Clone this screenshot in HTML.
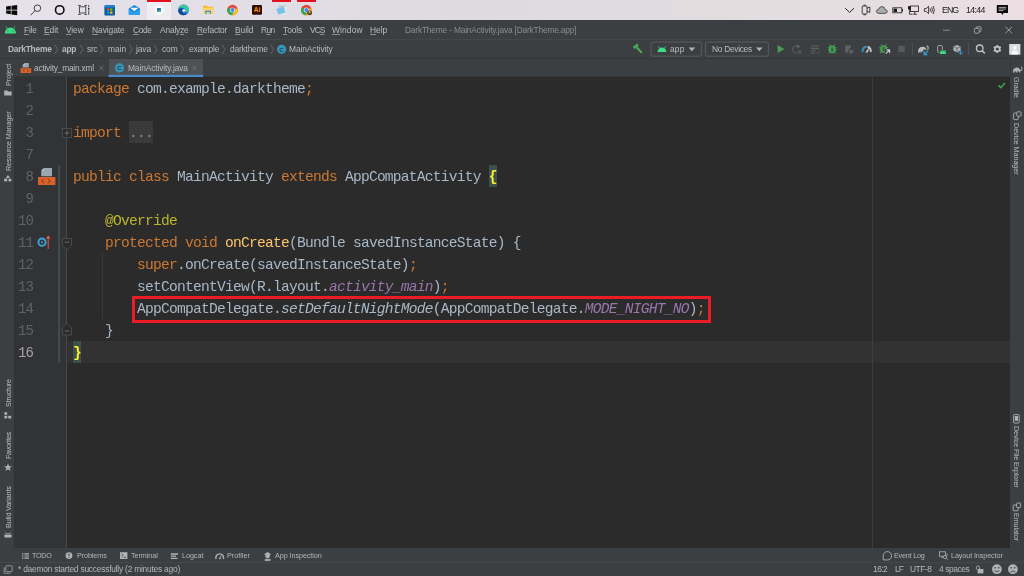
<!DOCTYPE html>
<html lang="en">
<head>
<meta charset="utf-8">
<title>DarkTheme - MainActivity.java [DarkTheme.app]</title>
<style>
*{margin:0;padding:0;box-sizing:border-box}
html,body{width:1024px;height:576px;overflow:hidden;background:#2b2b2b}
body{position:relative;font-family:"Liberation Sans",sans-serif;font-size:8px;color:#bbbbbb}
.abs{position:absolute}
.code,.ln,.t,.vl{will-change:transform}
svg{position:absolute;overflow:visible}
.t{position:absolute;white-space:nowrap;line-height:10px;height:10px}
#taskbar{left:0;top:0;width:1024px;height:20px;background:linear-gradient(90deg,#e5e2eb 0%,#e1dee6 25%,#dddbde 45%,#e2dcdf 70%,#ebdfe4 100%)}
#menubar{left:0;top:20px;width:1024px;height:20px;background:#3c3f41}
#navbar{left:0;top:39px;width:1024px;height:20px;background:#3c3f41;border-top:1px solid #45484a;border-bottom:1px solid #35383a}
#tabbar{left:14px;top:59px;width:996px;height:18px;background:#3c3f41;border-bottom:1px solid #333638}
#lstrip{left:0;top:59px;width:14px;height:489px;background:#3c3f41}
#rstrip{left:1010px;top:59px;width:14px;height:489px;background:#3c3f41}
#editor{left:14px;top:77px;width:996px;height:471px;background:#2b2b2b}
#gutter{left:14px;top:77px;width:53px;height:471px;background:#313335}
#gline{left:66px;top:77px;width:1px;height:471px;background:#484848}
#caretrow{left:14px;top:341px;width:996px;height:22px;background:#323232}
#bottombar{left:0;top:548px;width:1024px;height:14px;background:#3c3f41}
#statusbar{left:0;top:562px;width:1024px;height:14px;background:#3c3f41;border-top:1px solid #444749}
.menu{color:#bbbbbb;font-size:8.4px;top:24.8px}
.menu u{text-decoration:underline;text-underline-offset:0.6px;text-decoration-thickness:0.6px;text-decoration-color:#8e9092}
.bc{color:#bbbbbb;font-size:8.4px;top:43.8px}
.bc b{font-weight:bold}
.tab{color:#bbbbbb;font-size:8.4px;top:62.5px}
.tw{color:#b4b6b8;font-size:7.2px;top:551.4px}
.st{color:#b4b6b8;font-size:8.4px;top:564.2px}
.tb{color:#1a1a1a;font-size:8.8px;top:5.3px}
.vl{position:absolute;white-space:nowrap;font-size:7.2px;line-height:10px;height:10px;color:#bbbbbb;transform-origin:0 0}
.vl.l{transform:rotate(-90deg)}
.vl.r{transform:rotate(90deg)}
.code{position:absolute;left:73px;white-space:pre;font-family:"Liberation Mono","DejaVu Sans Mono",monospace;font-size:14.6px;letter-spacing:-0.7614px;line-height:22px;height:22px;color:#a9b7c6}
.ln{position:absolute;left:12.6px;width:20px;text-align:right;white-space:pre;font-family:"Liberation Mono","DejaVu Sans Mono",monospace;font-size:14px;letter-spacing:-0.9px;line-height:22px;height:22px;color:#606366}
.k{color:#cc7832}.an{color:#bbb529}.fn{color:#ffc66d}.sf{color:#9876aa;font-style:italic}.sm{font-style:italic}
.br{background:#3b514d;color:#ffef28;font-weight:bold;display:inline-block;height:22px;vertical-align:top;margin-top:-1px;padding-top:1px}
.fold{background:#3a3a3a;color:#8c8c8c;display:inline-block;height:22px;vertical-align:top;margin-top:-1px;padding-top:1px}
.combo{position:absolute;top:41.5px;height:15px;border:1px solid #5e6062;border-radius:2px}
</style>
</head>
<body>
<div id="taskbar" class="abs"></div>
<div id="menubar" class="abs"></div>
<div id="navbar" class="abs"></div>
<div id="tabbar" class="abs"></div>
<div id="editor" class="abs"></div>
<div id="caretrow" class="abs"></div>
<div id="gutter" class="abs"></div>
<div id="gline" class="abs"></div>
<div id="lstrip" class="abs"></div>
<div id="rstrip" class="abs"></div>
<div id="bottombar" class="abs"></div>
<div id="statusbar" class="abs"></div>

<!--TASKBAR ICONS-->
<div class="abs" style="left:147px;top:0;width:24px;height:20px;background:#efedf2"></div>
<div class="abs" style="left:147px;top:0;width:24px;height:1.6px;background:#e3101f"></div>
<div class="abs" style="left:272.3px;top:0;width:18.7px;height:1.6px;background:#e3101f"></div>
<div class="abs" style="left:297px;top:0;width:18.7px;height:1.6px;background:#e3101f"></div>
<svg style="left:0;top:0" width="330" height="20" viewBox="0 0 330 20">
 <!-- windows logo -->
 <g fill="#0a0a0a">
  <path d="M6.1 6.5 L10.8 5.8 L10.8 9.7 L6.1 9.7 Z"/>
  <path d="M11.5 5.7 L17.2 4.9 L17.2 9.7 L11.5 9.7 Z"/>
  <path d="M6.1 10.4 L10.8 10.4 L10.8 14.3 L6.1 13.6 Z"/>
  <path d="M11.5 10.4 L17.2 10.4 L17.2 15.2 L11.5 14.4 Z"/>
 </g>
 <!-- search -->
 <circle cx="37.4" cy="8.2" r="3.3" fill="none" stroke="#222" stroke-width="0.85"/>
 <path d="M35 10.7 L30.5 15.3" stroke="#222" stroke-width="0.85" fill="none"/>
 <!-- cortana -->
 <circle cx="59.7" cy="9.9" r="4.2" fill="none" stroke="#111" stroke-width="1.6"/>
 <!-- task view -->
 <g fill="none" stroke="#333" stroke-width="0.85">
  <rect x="79.4" y="6.8" width="6.4" height="6.2"/>
  <path d="M78 5.4 H80.8 M84.4 5.4 H87 M78 14.4 H80.8 M84.4 14.4 H87"/>
  <path d="M88.7 5 V7.4 M88.7 10.4 V14.8"/>
 </g>
 <rect x="88" y="8" width="1.4" height="1.6" fill="#222"/>
 <!-- store -->
 <path d="M104.4 6.6 H115 V14.6 Q115 15.6 114 15.6 H105.4 Q104.4 15.6 104.4 14.6 Z" fill="#0d5a9c"/>
 <path d="M105.4 5 H114 Q115 5 115 6 V7.4 H104.4 V6 Q104.4 5 105.4 5 Z" fill="#2580cc"/>
 <rect x="107" y="8.4" width="2.3" height="2.3" fill="#f25022"/>
 <rect x="110.1" y="8.4" width="2.3" height="2.3" fill="#7fba00"/>
 <rect x="107" y="11.5" width="2.3" height="2.3" fill="#00a4ef"/>
 <rect x="110.1" y="11.5" width="2.3" height="2.3" fill="#ffb900"/>
 <!-- mail -->
 <path d="M128.8 8.6 L134.4 5 L140 8.6 V14.8 H128.8 Z" fill="#1684d8"/>
 <path d="M130.2 7.8 H138.6 L134.4 11.2 Z" fill="#f4f9fd"/>
 <path d="M128.8 9 L134.4 12.6 L140 9 V14.8 H128.8 Z" fill="#2a9df0"/>
 <!-- android studio -->
 <circle cx="159" cy="10" r="4.6" fill="#ffffff"/>
 <path d="M157 8 H161 V12 H157 Z" fill="#3a7fd5"/>
 <path d="M158.2 9.6 L159.6 8.2 L161 12 H158.4 Z" fill="#3ddc84"/>
 <circle cx="159" cy="9.4" r="0.9" fill="#1c3d6e"/>
 <!-- edge -->
 <circle cx="183.5" cy="9.9" r="5.4" fill="#1b7fd1"/>
 <path d="M183.5 4.5 A5.4 5.4 0 0 1 188.9 9.9 Q188.9 12 186.5 12 Q184.2 12 184.6 10 Q185 8 183 7.6 Q180 7.4 178.6 9 A5.4 5.4 0 0 1 183.5 4.5 Z" fill="#3fc7a0"/>
 <path d="M178.2 10.6 Q178.4 14.8 183 15.2 Q185.6 15.2 187.4 13.4 Q184 14.4 182.4 12.2 Q181.2 10 183 8.4 Q179.4 7.8 178.2 10.6 Z" fill="#15458c"/>
 <circle cx="183.8" cy="10.6" r="1.4" fill="#e8eef5"/>
 <!-- explorer -->
 <path d="M203 5.8 H207 L208 6.8 H213.2 V13.8 H203 Z" fill="#f5b63a"/>
 <path d="M203 7.8 H213.2 V13.8 H203 Z" fill="#ffd767"/>
 <rect x="205.2" y="10.6" width="5.8" height="3.2" fill="#3a96dd"/>
 <rect x="206.6" y="12" width="3" height="1.8" fill="#ffd767"/>
 <!-- chrome -->
 <g id="chr">
 <circle cx="232.5" cy="10" r="5.3" fill="#e8453c"/>
 <path d="M232.5 10 L227.9 7.4 A5.3 5.3 0 0 0 232.0 15.3 L234.9 10.5 Z" fill="#34a853"/>
 <path d="M232.5 10 L237.5 8.2 A5.3 5.3 0 0 1 232.0 15.3 L234.8 10.6 Z" fill="#fbc116"/>
 <circle cx="232.5" cy="10" r="2.5" fill="#f3f3f3"/>
 <circle cx="232.5" cy="10" r="1.9" fill="#4285f4"/>
 </g>
 <!-- illustrator -->
 <rect x="252" y="5" width="10" height="9.8" rx="1.4" fill="#2e0a00"/>
 <text x="257" y="12.4" font-family="Liberation Sans, sans-serif" font-weight="bold" font-size="6.4" fill="#ff9a00" text-anchor="middle">Ai</text>
 <!-- notepad -->
 <path d="M277.6 5.4 L286 5 L286.6 13.6 L279 14.4 Z" fill="#dfe9f2"/>
 <path d="M276.2 9 L283.6 6.2 L285.4 12.6 L278.4 14.4 Z" fill="#7cc0ea"/>
 <path d="M278.2 5.8 L285.6 5.2 L285.8 6.6 L278.4 7.4 Z" fill="#b8c4cf"/>
 <!-- chrome 2 -->
 <use href="#chr" x="73.8" y="0"/>
 <circle cx="309.6" cy="12.8" r="2.5" fill="#6b4a22"/>
 <circle cx="309.6" cy="12" r="1" fill="#d9b070"/>
</svg>
<svg style="left:840px;top:0" width="184" height="20" viewBox="840 0 184 20">
 <!-- chevron -->
 <path d="M845.2 8.2 L849.6 12.4 L854 8.2" fill="none" stroke="#111" stroke-width="0.9"/>
 <!-- meet now / device -->
 <g fill="none" stroke="#1a1a1a" stroke-width="0.8">
  <rect x="862.2" y="6" width="4.8" height="8" rx="0.8"/>
  <path d="M863.4 5.2 H865.8 M863.4 14.8 H865.8"/>
  <path d="M867 8.2 L869.8 7 V12.4 L867 11.4"/>
 </g>
 <!-- cloud -->
 <path d="M878.6 13.4 H885.2 Q887.4 13.2 887.2 11.2 Q887 9.6 885.2 9.6 Q884.8 6.6 881.8 6.6 Q879.2 6.8 878.8 9.2 Q876.4 9.4 876.4 11.4 Q876.6 13.2 878.6 13.4 Z" fill="#a7acb0" stroke="#2a2a2a" stroke-width="0.7"/>
 <!-- battery -->
 <rect x="892.8" y="7.8" width="9" height="5" fill="none" stroke="#1a1a1a" stroke-width="0.8"/>
 <rect x="893.6" y="8.6" width="3.4" height="3.4" fill="#1a1a1a"/>
 <rect x="902" y="9.2" width="1" height="2.2" fill="#1a1a1a"/>
 <!-- network -->
 <g fill="none" stroke="#1a1a1a" stroke-width="0.8">
  <rect x="910.6" y="6" width="8" height="5.6"/>
  <path d="M912.6 14.2 H917 M914.8 11.6 V14.2"/>
  <rect x="908.4" y="6.6" width="2" height="2.4" fill="#1a1a1a"/>
  <path d="M909.4 9 V14.2 H912"/>
 </g>
 <!-- volume -->
 <path d="M924.4 8.6 H926.2 L928.6 6.4 V13.6 L926.2 11.4 H924.4 Z" fill="none" stroke="#1a1a1a" stroke-width="0.8"/>
 <path d="M930 8.4 Q931 10 930 11.6 M931.6 7.2 Q933.2 10 931.6 12.8 M933.2 6 Q935.4 10 933.2 14" fill="none" stroke="#1a1a1a" stroke-width="0.8"/>
 <!-- notification -->
 <path d="M996.8 5 H1008 V13 H1003.6 L1002.4 15 L1001.2 13 H996.8 Z" fill="#0a0a0a"/>
 <path d="M998.6 7.4 H1006.2 M998.6 9 H1006.2 M998.6 10.6 H1003.4" stroke="#f0e6ea" stroke-width="0.7"/>
</svg>

<!--CHROME ICONS-->
<svg style="left:0;top:20px" width="1024" height="57" viewBox="0 20 1024 57">
 <!-- android logo in menubar -->
 <path d="M4.8 33.4 A5.6 5.8 0 0 1 16 33.4 Z" fill="#3ddc84"/>
 <path d="M7.2 28.6 L6 26.4 M13.6 28.6 L14.8 26.4" stroke="#3ddc84" stroke-width="0.8" fill="none"/>
 <circle cx="7.9" cy="31" r="0.55" fill="#3c3f41"/><circle cx="12.9" cy="31" r="0.55" fill="#3c3f41"/>
 <!-- window controls -->
 <path d="M943 30.2 H949.8" stroke="#9da0a2" stroke-width="0.8"/>
 <g fill="none" stroke="#b4b6b8" stroke-width="0.8">
  <rect x="974.4" y="28.4" width="4.8" height="4.8" rx="0.8"/>
  <path d="M976.2 28.2 V27.6 Q976.2 26.8 977 26.8 H980.2 Q981 26.8 981 27.6 V30.8 Q981 31.6 980.2 31.6 H979.4"/>
  <path d="M1005.6 26.8 L1012 33.2 M1012 26.8 L1005.6 33.2"/>
 </g>
 <!-- breadcrumb separators -->
 <g fill="none" stroke="#6b6e70" stroke-width="0.8">
  <path d="M54.6 44.6 L57.6 49.4 L54.6 54.2"/>
  <path d="M80 44.6 L83 49.4 L80 54.2"/>
  <path d="M100 44.6 L103 49.4 L100 54.2"/>
  <path d="M129.2 44.6 L132.2 49.4 L129.2 54.2"/>
  <path d="M154 44.6 L157 49.4 L154 54.2"/>
  <path d="M180.6 44.6 L183.6 49.4 L180.6 54.2"/>
  <path d="M222 44.6 L225 49.4 L222 54.2"/>
  <path d="M270.6 44.6 L273.6 49.4 L270.6 54.2"/>
 </g>
 <!-- class icon in breadcrumb -->
 <circle cx="281.6" cy="49.3" r="4.6" fill="#3792b8"/>
 <text x="281.6" y="51.6" font-family="Liberation Sans, sans-serif" font-weight="bold" font-size="6.2" fill="#25424f" text-anchor="middle">C</text>
 <!-- selected tab -->
 <rect x="109" y="59" width="94" height="16" fill="#4e5254"/>
 <rect x="108.4" y="74.8" width="94.8" height="2.2" fill="#4a88c7"/>
 <!-- xml file icon -->
 <path d="M25.2 63 H28.8 V67.6 H22.6 V65.6 Z" fill="#9aa7b0"/>
 <path d="M22.6 65.2 L24.8 63 V65.2 Z" fill="#c3ccd2"/>
 <rect x="20.6" y="68.2" width="10.6" height="4.8" fill="#d9622b"/>
 <path d="M24.6 69.4 L23.2 70.6 L24.6 71.8 M27.2 69.4 L28.6 70.6 L27.2 71.8" fill="none" stroke="#6d2f12" stroke-width="0.7"/>
 <!-- tab close icons -->
 <g fill="none" stroke="#7a7d7f" stroke-width="0.7">
  <path d="M99.2 65.8 L103.6 70.2 M103.6 65.8 L99.2 70.2"/>
  <path d="M192.2 65.8 L196.6 70.2 M196.6 65.8 L192.2 70.2"/>
 </g>
 <!-- class icon in tab -->
 <circle cx="119.5" cy="67.9" r="4.6" fill="#3792b8"/>
 <text x="119.5" y="70.2" font-family="Liberation Sans, sans-serif" font-weight="bold" font-size="6.2" fill="#25424f" text-anchor="middle">C</text>
 <!-- hammer -->
 <path d="M633.5 47.9 L638 44.7" stroke="#4ca556" stroke-width="2.7" fill="none"/>
 <path d="M636 46.4 L641.2 52.2" stroke="#4ca556" stroke-width="2.2" stroke-linecap="round" fill="none"/>
 <!-- combos -->
 <rect x="651" y="42" width="50.4" height="14.2" rx="2" fill="none" stroke="#5d6062" stroke-width="0.9"/>
 <rect x="705.4" y="42" width="63" height="14.2" rx="2" fill="none" stroke="#5d6062" stroke-width="0.9"/>
 <path d="M657.6 52 A4.4 4.6 0 0 1 666.4 52 Z" fill="#3ddc84"/>
 <path d="M659.4 48 L658.4 46.2 M664.6 48 L665.6 46.2" stroke="#3ddc84" stroke-width="0.7"/>
 <path d="M688.6 47.4 H695.2 L691.9 51.2 Z" fill="#afb1b3"/>
 <path d="M756 47.4 H762.6 L759.3 51.2 Z" fill="#afb1b3"/>
 <!-- run -->
 <path d="M777.6 45 L784.4 49 L777.6 53 Z" fill="#499c54"/>
 <!-- apply changes (disabled) -->
 <g fill="none" stroke="#5f6264" stroke-width="1">
  <path d="M799.2 50.4 A3.4 3.4 0 1 1 797.6 46.4"/>
 </g>
 <path d="M797 44.4 L800.6 46.4 L797.4 48.6 Z" fill="#5f6264"/>
 <text x="798.6" y="53.6" font-family="Liberation Sans, sans-serif" font-weight="bold" font-size="4.6" fill="#5f6264">A</text>
 <!-- apply code changes (disabled) -->
 <path d="M810.8 46 H819 M810.8 48.4 H819 M810.8 50.8 H816 M810.8 53 H815" stroke="#5f6264" stroke-width="1.1" fill="none"/>
 <path d="M817.6 52.8 Q819.8 53 819.6 50.6" stroke="#5f6264" stroke-width="0.7" fill="none"/>
 <!-- debug -->
 <g id="bug">
  <rect x="828.8" y="45.6" width="6.8" height="7.6" rx="3" fill="#499c54"/>
  <path d="M830.4 45.8 L829.4 44.5 M834 45.8 L835 44.5" stroke="#499c54" stroke-width="1" fill="none"/>
  <path d="M829 47.8 H827.9 M835.4 47.8 H836.5 M829 50.2 H827.9 M835.4 50.2 H836.5 M829.6 52.4 L828.6 53.2 M834.8 52.4 L835.8 53.2" stroke="#499c54" stroke-width="1" fill="none"/>
  <rect x="831.3" y="47.4" width="1.8" height="4.2" fill="#305c38"/>
 </g>
 <!-- coverage (disabled) -->
 <path d="M845.2 45.4 H851 V47.4 L848.6 49 V52.6 H845.2 Z" fill="#5f6264"/>
 <path d="M849.8 49 L854.4 51.6 L849.8 54.2 Z" fill="#5f6264"/>
 <!-- profiler gauge -->
 <path d="M862.8 52 A4 4 0 0 1 866.6 46.7" fill="none" stroke="#3592c4" stroke-width="2"/>
 <path d="M867.6 46.8 A4 4 0 0 1 870.6 52" fill="none" stroke="#c4c6c8" stroke-width="2"/>
 <path d="M865.8 52.2 L868.8 48 L867.6 52.2 Z" fill="#c4c6c8" stroke="#c4c6c8" stroke-width="0.6"/>
 <!-- attach debugger -->
 <use href="#bug" x="51.4" y="-0.4"/>
 <rect x="884.8" y="49" width="5.6" height="5.4" fill="#3c3f41"/>
 <path d="M885.8 53.6 L889.2 50.2 M886.4 49.9 H889.6 V53.1" stroke="#c4c6c8" stroke-width="1.2" fill="none"/>
 <!-- stop (disabled) -->
 <rect x="898.2" y="45.8" width="6.6" height="6.4" fill="#56595b"/>
 <!-- separators -->
 <path d="M912.4 43 V55 M968.6 43 V55" stroke="#555759" stroke-width="0.8"/>
 <!-- gradle sync -->
 <path d="M918 52.6 Q917.6 47.4 922.2 46.8 Q925.6 46.6 926.2 49 L926.4 49.6 Q927.4 49.4 927.6 48.2 Q927.6 47 926.6 46.6 L926.4 45.6 Q928.6 45.4 928.8 47.8 Q929 50.4 926.6 51 L925 51 V52.6 H923.2 V51.2 H921.8 V52.6 H920.4 V51.2 L919.6 52.6 Z" fill="#b7b9bb"/>
 <path d="M923.2 49.6 H929 V55 H923.2 Z" fill="#3c3f41"/>
 <path d="M928.2 50.6 L924.6 54.2 M924.2 51.4 V54.6 H927.4" stroke="#389fd6" stroke-width="1.3" fill="none"/>
 <!-- avd manager -->
 <rect x="937.7" y="45.6" width="4.6" height="6.8" rx="0.8" fill="none" stroke="#afb1b3" stroke-width="0.9"/>
 <path d="M939.4 50 H946.4 V54.4 H939.4 Z" fill="#3c3f41"/>
 <path d="M939.9 54 A3.1 3.4 0 0 1 946.1 54 Z" fill="#3ddc84"/>
 <path d="M941.2 51.4 L940.4 50 M944.8 51.4 L945.6 50" stroke="#3ddc84" stroke-width="0.7" fill="none"/>
 <!-- sdk manager -->
 <path d="M957 45 L960.6 46.6 V50.6 L957 52.4 L953.4 50.6 V46.6 Z" fill="#afb1b3"/>
 <path d="M953.8 46.8 L957 48.4 L960.2 46.8 M957 48.4 V52" stroke="#3c3f41" stroke-width="0.6" fill="none"/>
 <path d="M960.6 49.6 V54 M958.6 52.2 L960.6 54.4 L962.6 52.2" stroke="#389fd6" stroke-width="1" fill="none"/>
 <!-- search -->
 <circle cx="979.7" cy="48.3" r="3.3" fill="none" stroke="#c0c2c4" stroke-width="1.3"/>
 <path d="M982.2 50.8 L984.8 53.4" stroke="#c0c2c4" stroke-width="1.5"/>
 <!-- gear -->
 <circle cx="997.3" cy="49" r="2.4" fill="none" stroke="#c0c2c4" stroke-width="1.7"/>
 <path d="M997.3 44.9 V46.3 M997.3 51.7 V53.1 M993.75 46.95 L994.95 47.65 M999.65 50.35 L1000.85 51.05 M993.75 51.05 L994.95 50.35 M999.65 47.65 L1000.85 46.95" stroke="#c0c2c4" stroke-width="1.5"/>
 <!-- avatar -->
 <rect x="1009.2" y="44" width="11.2" height="10.6" fill="#d9dadb"/>
 <circle cx="1014.8" cy="47.8" r="1.9" fill="#f7f7f7"/>
 <path d="M1011.2 54.6 Q1011.2 50.6 1014.8 50.6 Q1018.4 50.6 1018.4 54.6 Z" fill="#f7f7f7"/>
</svg>

<!--CODE-->
<div class="ln" style="top:78px">1</div>
<div class="code" style="top:78px"><span class="k">package </span>com.example.darktheme<span class="k">;</span></div>
<div class="ln" style="top:100px">2</div>
<div class="ln" style="top:122px">3</div>
<div class="code" style="top:122px"><span class="k">import </span><span class="fold">...</span></div>
<div class="ln" style="top:144px">7</div>
<div class="ln" style="top:166px">8</div>
<div class="code" style="top:166px"><span class="k">public class </span>MainActivity <span class="k">extends </span>AppCompatActivity <span class="br">{</span></div>
<div class="ln" style="top:188px">9</div>
<div class="ln" style="top:210px">10</div>
<div class="code" style="top:210px">    <span class="an">@Override</span></div>
<div class="ln" style="top:232px">11</div>
<div class="code" style="top:232px">    <span class="k">protected void </span><span class="fn">onCreate</span>(Bundle savedInstanceState) {</div>
<div class="ln" style="top:254px">12</div>
<div class="code" style="top:254px">        <span class="k">super</span>.onCreate(savedInstanceState)<span class="k">;</span></div>
<div class="ln" style="top:276px">13</div>
<div class="code" style="top:276px">        setContentView(R.layout.<span class="sf">activity_main</span>)<span class="k">;</span></div>
<div class="ln" style="top:298px">14</div>
<div class="code" style="top:298px">        AppCompatDelegate.<span class="sm">setDefaultNightMode</span>(AppCompatDelegate.<span class="sf">MODE_NIGHT_NO</span>)<span class="k">;</span></div>
<div class="ln" style="top:320px">15</div>
<div class="code" style="top:320px">    }</div>
<div class="ln" style="top:342px;color:#a4a3a3">16</div>
<div class="code" style="top:342px"><span class="br">}</span></div>
<div class="abs" style="left:58px;top:165px;width:2px;height:198px;background:#3d4d4a"></div>
<div class="abs" style="left:102px;top:253px;width:1px;height:66px;background:#393939"></div>
<div class="abs" style="left:872px;top:77px;width:1px;height:471px;background:#3d3d3d"></div>
<div class="abs" style="left:132px;top:296px;width:579px;height:27px;border:3px solid #ec1c24"></div>

<!--STRIP + GUTTER ICONS-->
<svg style="left:0;top:59px" width="1024" height="489" viewBox="0 59 1024 489">
 <!-- left strip icons -->
 <path d="M4.2 90.4 H7.2 L8.2 91.4 H11.6 V95.6 H4.2 Z" fill="#afb1b3"/>
 <g fill="#afb1b3">
  <path d="M7.9 175 L10 178 H5.8 Z"/><rect x="4.2" y="178.6" width="3" height="2.8"/><circle cx="9.9" cy="180" r="1.6"/>
  <rect x="4.4" y="412.2" width="2.8" height="2.6"/><rect x="4.4" y="415.8" width="2.8" height="2.6"/><rect x="8.2" y="415.8" width="3" height="2.6"/>
  <path d="M8 463.4 L9.1 466.2 L12 466.3 L9.7 468.1 L10.5 471 L8 469.3 L5.5 471 L6.3 468.1 L4 466.3 L6.9 466.2 Z"/>
  <path d="M4.4 537.6 V534 L5.6 535 H10.4 L11.6 534 V537.6 Z M5.2 531.4 L6.6 533.4 H9.4 L10.8 531.4 L10 534.4 H6 Z"/>
 </g>
 <!-- right strip icons -->
 <path d="M1013 72.4 Q1012.8 68 1016.6 67.6 Q1019.2 67.4 1019.8 69.4 L1020 70 Q1021.2 70 1021.6 68.8 Q1021.8 67.4 1020.6 66.8 Q1022.2 66.2 1022.4 68 Q1022.8 70.8 1020.2 71.2 L1020.2 72.4 H1018.8 V71.2 H1017.2 V72.4 H1015.8 V71.2 H1014.6 V72.4 Z" fill="#afb1b3"/>
 <g fill="none" stroke="#afb1b3" stroke-width="0.9">
  <rect x="1013.6" y="113" width="4.6" height="6.6" rx="0.7"/>
  <rect x="1016.8" y="111.8" width="4.2" height="4.4" rx="0.7" fill="#3c3f41"/>
  <rect x="1013.6" y="414.6" width="5.6" height="8.4" rx="0.8"/>
  <rect x="1013.2" y="505" width="5" height="5.8" rx="0.7"/>
  <rect x="1016.6" y="503" width="4" height="4.6" rx="0.7" fill="#3c3f41"/>
 </g>
 <rect x="1014.8" y="416" width="3.2" height="4.8" fill="#afb1b3"/>
 <!-- inspection check -->
 <path d="M998.5 85.4 L1000.9 87.7 L1004.9 83" fill="none" stroke="#43a04e" stroke-width="1.6"/>
 <path d="M1010.5 59 V76.5" stroke="#35383a" stroke-width="1"/>
 <!-- fold + marker at import -->
 <rect x="62.5" y="128.5" width="9" height="9" fill="#2b2b2b" stroke="#515151" stroke-width="0.8"/>
 <path d="M64.6 133 H69.4 M67 130.6 V135.4" stroke="#7a7a7a" stroke-width="0.8"/>
 <!-- fold markers method -->
 <path d="M62.5 238.5 H71.5 V245.5 L67 250 L62.5 245.5 Z" fill="#2b2b2b" stroke="#515151" stroke-width="0.8"/>
 <path d="M64.8 242.2 H69.2" stroke="#7a7a7a" stroke-width="0.8"/>
 <path d="M62.5 335 H71.5 V327.8 L67 323.2 L62.5 327.8 Z" fill="#2b2b2b" stroke="#515151" stroke-width="0.8"/>
 <path d="M64.8 331 H69.2" stroke="#7a7a7a" stroke-width="0.8"/>
 <!-- related xml icon line 8 -->
 <path d="M44.4 168 H52 V176.2 H41.2 V171.2 Z" fill="#9aa7b0"/>
 <path d="M41.2 170.6 L43.8 168 V170.6 Z" fill="#c9d1d6"/>
 <rect x="38" y="177" width="17.4" height="8" fill="#d9622b"/>
 <path d="M44 178.8 L41.8 181 L44 183.2 M48 178.8 L50.2 181 L48 183.2" fill="none" stroke="#73310f" stroke-width="0.9"/>
 <!-- override icon line 11 -->
 <circle cx="42" cy="242.2" r="3.6" fill="none" stroke="#3f9fd0" stroke-width="2"/>
 <circle cx="42" cy="242.2" r="1" fill="#3f9fd0"/>
 <path d="M48.2 249 V237.4" stroke="#d9534a" stroke-width="1.1"/>
 <path d="M45.8 238.6 L48.2 235.4 L50.6 238.6 Z" fill="#e8604a"/>
</svg>

<!--BOTTOM ICONS-->
<svg style="left:0;top:548px" width="1024" height="28" viewBox="0 548 1024 28">
 <!-- todo -->
 <path d="M24.4 553.8 H29 M24.4 556 H29 M24.4 558.2 H29" stroke="#afb1b3" stroke-width="1.2"/>
 <path d="M22 553.8 H23.4 M22 556 H23.4 M22 558.2 H23.4" stroke="#afb1b3" stroke-width="1.2"/>
 <!-- problems -->
 <circle cx="69" cy="555.6" r="3.4" fill="#afb1b3"/>
 <path d="M69 553.4 V556.2 M69 557.2 V558" stroke="#3c3f41" stroke-width="1"/>
 <!-- terminal -->
 <rect x="120" y="552.2" width="7.4" height="6.8" fill="#afb1b3"/>
 <path d="M121.4 553.8 L123.2 555.4 L121.4 557 M123.8 557.4 H126" stroke="#3c3f41" stroke-width="0.8" fill="none"/>
 <!-- logcat -->
 <path d="M170.8 554 H178 M170.8 556.2 H176 M170.8 558.4 H177.4" stroke="#afb1b3" stroke-width="1.3"/>
 <!-- profiler -->
 <path d="M216 559 A3.9 3.9 0 1 1 223.4 559" fill="none" stroke="#afb1b3" stroke-width="1.4"/>
 <path d="M219 559 L221 555.6 L220.4 559 Z" fill="#afb1b3" stroke="#afb1b3" stroke-width="0.4"/>
 <!-- app inspection -->
 <path d="M265.4 556.6 V554.6 Q265.4 552.2 267.6 552.2 Q269.8 552.2 269.8 554.6 V556.6 Q269.8 558.4 267.6 558.4 Q265.4 558.4 265.4 556.6 Z" fill="#afb1b3"/>
 <path d="M264.2 554.2 H271 M265 560.6 H270.2 V559.4 H265 Z" stroke="#afb1b3" stroke-width="0.8" fill="#afb1b3"/>
 <!-- event log -->
 <path d="M883.2 559.8 V556 A4.2 4.2 0 1 1 887.4 560 Z" fill="none" stroke="#afb1b3" stroke-width="0.9"/>
 <!-- layout inspector -->
 <g fill="none" stroke="#afb1b3" stroke-width="0.8">
  <rect x="939.6" y="551.8" width="6" height="4.4"/>
  <path d="M941.2 557.6 H943.2 M947 553.4 V556"/>
  <circle cx="945" cy="557" r="1.6" fill="#3c3f41"/>
  <path d="M946.2 558.2 L947.8 559.8"/>
 </g>
 <!-- status bar left icon -->
 <g fill="none" stroke="#9a9da0" stroke-width="0.9">
  <rect x="5.8" y="565.8" width="6.4" height="5.8" rx="0.6"/>
  <path d="M4.2 567.4 V573.2 H10.6"/>
 </g>
 <!-- lock -->
 <rect x="977.6" y="569" width="5.8" height="4.4" fill="#afb1b3"/>
 <path d="M976.4 569.4 V567.6 Q976.4 566 978 566 Q979.6 566 979.6 567.6 V569" fill="none" stroke="#afb1b3" stroke-width="0.9"/>
 <!-- faces -->
 <circle cx="996.9" cy="569.2" r="4.9" fill="#afb1b3"/>
 <circle cx="995.1" cy="567.8" r="0.8" fill="#3c3f41"/><circle cx="998.7" cy="567.8" r="0.8" fill="#3c3f41"/>
 <path d="M994.4 570.6 Q996.9 573 999.4 570.6" fill="none" stroke="#3c3f41" stroke-width="0.8"/>
 <circle cx="1012.9" cy="569.2" r="4.9" fill="#afb1b3"/>
 <circle cx="1011.1" cy="567.8" r="0.8" fill="#3c3f41"/><circle cx="1014.7" cy="567.8" r="0.8" fill="#3c3f41"/>
 <path d="M1010.4 572 Q1012.9 569.8 1015.4 572" fill="none" stroke="#3c3f41" stroke-width="0.8"/>
</svg>

<!--TEXT-->
<div class="t menu" id="m0" style="left:23.75px;letter-spacing:-0.166px;"><u>F</u>ile</div>
<div class="t menu" id="m1" style="left:44.40px;letter-spacing:-0.063px;"><u>E</u>dit</div>
<div class="t menu" id="m2" style="left:66.00px;letter-spacing:-0.104px;"><u>V</u>iew</div>
<div class="t menu" id="m3" style="left:92.25px;letter-spacing:-0.041px;"><u>N</u>avigate</div>
<div class="t menu" id="m4" style="left:133.00px;letter-spacing:-0.362px;"><u>C</u>ode</div>
<div class="t menu" id="m5" style="left:160.00px;letter-spacing:-0.173px;">Analy<u>z</u>e</div>
<div class="t menu" id="m6" style="left:197.00px;letter-spacing:-0.196px;"><u>R</u>efactor</div>
<div class="t menu" id="m7" style="left:234.75px;letter-spacing:-0.058px;"><u>B</u>uild</div>
<div class="t menu" id="m8" style="left:261.00px;letter-spacing:-0.602px;">R<u>u</u>n</div>
<div class="t menu" id="m9" style="left:283.00px;letter-spacing:-0.072px;"><u>T</u>ools</div>
<div class="t menu" id="m10" style="left:310.00px;letter-spacing:-0.950px;">VC<u>S</u></div>
<div class="t menu" id="m11" style="left:332.00px;letter-spacing:0.134px;"><u>W</u>indow</div>
<div class="t menu" id="m12" style="left:370.40px;letter-spacing:-0.012px;"><u>H</u>elp</div>
<div class="t menu" id="mtitle" style="left:405.25px;letter-spacing:-0.192px;color:#8a8d8f">DarkTheme - MainActivity.java [DarkTheme.app]</div>
<div class="t bc" id="b0" style="left:8.00px;letter-spacing:-0.225px;"><b>DarkTheme</b></div>
<div class="t bc" id="b1" style="left:62.00px;letter-spacing:-0.230px;"><b>app</b></div>
<div class="t bc" id="b2" style="left:87.00px;letter-spacing:-0.191px;">src</div>
<div class="t bc" id="b3" style="left:107.50px;letter-spacing:-0.014px;">main</div>
<div class="t bc" id="b4" style="left:135.60px;letter-spacing:-0.094px;">java</div>
<div class="t bc" id="b5" style="left:162.00px;letter-spacing:-0.076px;">com</div>
<div class="t bc" id="b6" style="left:188.50px;letter-spacing:-0.222px;">example</div>
<div class="t bc" id="b7" style="left:229.75px;letter-spacing:-0.192px;">darktheme</div>
<div class="t bc" id="b8" style="left:289.00px;letter-spacing:-0.091px;">MainActivity</div>
<div class="t tab" id="tab0" style="left:33.75px;letter-spacing:-0.230px;">activity_main.xml</div>
<div class="t tab" id="tab1" style="left:127.75px;letter-spacing:-0.112px;">MainActivity.java</div>
<div class="t bc" id="cb0" style="left:670.00px;letter-spacing:0.205px;">app</div>
<div class="t bc" id="cb1" style="left:712.00px;letter-spacing:-0.298px;">No Devices</div>
<div class="t tw" id="tw0" style="left:32.25px;letter-spacing:-0.260px;">TODO</div>
<div class="t tw" id="tw1" style="left:76.50px;letter-spacing:-0.082px;">Problems</div>
<div class="t tw" id="tw2" style="left:131.00px;letter-spacing:-0.040px;">Terminal</div>
<div class="t tw" id="tw3" style="left:181.50px;letter-spacing:-0.041px;">Logcat</div>
<div class="t tw" id="tw4" style="left:226.75px;letter-spacing:0.009px;">Profiler</div>
<div class="t tw" id="tw5" style="left:274.90px;letter-spacing:-0.062px;">App Inspection</div>
<div class="t tw" id="tw6" style="left:894.00px;letter-spacing:-0.197px;">Event Log</div>
<div class="t tw" id="tw7" style="left:950.70px;letter-spacing:-0.091px;">Layout Inspector</div>
<div class="t st" id="st0" style="left:18.00px;letter-spacing:-0.217px;">* daemon started successfully (2 minutes ago)</div>
<div class="t st" id="st1" style="left:872.60px;letter-spacing:-0.528px;">16:2</div>
<div class="t st" id="st2" style="left:895.00px;letter-spacing:-0.941px;">LF</div>
<div class="t st" id="st3" style="left:910.00px;letter-spacing:-0.427px;">UTF-8</div>
<div class="t st" id="st4" style="left:938.70px;letter-spacing:-0.404px;">4 spaces</div>
<div class="t tb" id="tb0" style="left:942.00px;letter-spacing:-0.950px;">ENG</div>
<div class="t tb" id="tb1" style="left:966.00px;letter-spacing:-0.683px;">14:44</div>
<div class="vl l" id="vl0" style="left:3.5px;top:86.00px;letter-spacing:-0.011px;">Project</div>
<div class="vl l" id="vl1" style="left:3.5px;top:171.30px;letter-spacing:-0.103px;">Resource Manager</div>
<div class="vl l" id="vl2" style="left:3.5px;top:407.00px;letter-spacing:-0.141px;">Structure</div>
<div class="vl l" id="vl3" style="left:3.5px;top:459.30px;letter-spacing:-0.296px;">Favorites</div>
<div class="vl l" id="vl4" style="left:3.5px;top:527.75px;letter-spacing:-0.147px;">Build Variants</div>
<div class="vl r" id="vr0" style="left:1021px;top:76.80px;letter-spacing:-0.130px;">Gradle</div>
<div class="vl r" id="vr1" style="left:1021px;top:123.00px;letter-spacing:-0.053px;">Device Manager</div>
<div class="vl r" id="vr2" style="left:1021px;top:426.00px;letter-spacing:-0.136px;">Device File Explorer</div>
<div class="vl r" id="vr3" style="left:1021px;top:513.30px;letter-spacing:-0.121px;">Emulator</div>

</body>
</html>
